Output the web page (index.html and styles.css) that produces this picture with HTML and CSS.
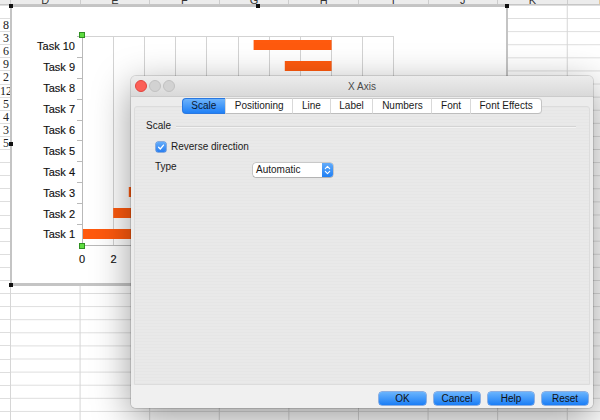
FILE: index.html
```html
<!DOCTYPE html>
<html>
<head>
<meta charset="utf-8">
<title>X Axis</title>
<link rel="stylesheet" href="styles.css">
</head>
<body>
<div class="sheet">
  <div class="colhead">
    <span class="corner"></span>
    <span class="ch">D</span><span class="ch">E</span><span class="ch">F</span><span class="ch">G</span><span class="ch">H</span><span class="ch">I</span><span class="ch">J</span><span class="ch">K</span><span class="ch">L</span>
  </div>
  <div class="rowhead">
    <span></span><span>8</span><span>3</span><span>6</span><span>9</span><span>2</span><span>12</span><span>5</span><span>4</span><span>3</span><span>5</span>
    <span></span><span></span><span></span><span></span><span></span><span></span><span></span><span></span><span></span><span></span><span></span><span></span><span></span><span></span><span></span><span></span><span></span><span></span><span></span><span></span><span></span>
  </div>
  <div class="cells"></div>
</div>

<div class="chart">
  <svg width="494" height="277" viewBox="12 7 494 277" xmlns="http://www.w3.org/2000/svg">
    <g class="grid" stroke="#d3d3d3" stroke-width="1" fill="none">
      <line x1="82" y1="36.5" x2="394" y2="36.5"/>
      <line x1="113.5" y1="36" x2="113.5" y2="245"/>
      <line x1="144.5" y1="36" x2="144.5" y2="245"/>
      <line x1="175.5" y1="36" x2="175.5" y2="245"/>
      <line x1="206.5" y1="36" x2="206.5" y2="245"/>
      <line x1="238.5" y1="36" x2="238.5" y2="245"/>
      <line x1="269.5" y1="36" x2="269.5" y2="245"/>
      <line x1="300.5" y1="36" x2="300.5" y2="245"/>
      <line x1="331.5" y1="36" x2="331.5" y2="245"/>
      <line x1="362.5" y1="36" x2="362.5" y2="245"/>
      <line x1="393.5" y1="36" x2="393.5" y2="245"/>
    </g>
    <g fill="#ff5a0e">
      <rect x="253.6" y="40" width="78" height="10"/>
      <rect x="284.8" y="61" width="46.8" height="10"/>
      <rect x="238" y="82" width="62.4" height="10"/>
      <rect x="222.4" y="103" width="62.4" height="10"/>
      <rect x="206.8" y="124" width="62.4" height="10"/>
      <rect x="191.2" y="145" width="62.4" height="10"/>
      <rect x="160" y="166" width="62.4" height="10"/>
      <rect x="128.8" y="187" width="62.4" height="10"/>
      <rect x="113.2" y="208" width="62.4" height="10"/>
      <rect x="82" y="229" width="78" height="10"/>
    </g>
    <g stroke="#b9b9b9" stroke-width="1" fill="none">
      <line x1="82.5" y1="36" x2="82.5" y2="245"/>
      <line x1="82" y1="245.5" x2="394" y2="245.5"/>
      <line x1="77" y1="36.5" x2="82" y2="36.5"/>
      <line x1="77" y1="57.5" x2="82" y2="57.5"/>
      <line x1="77" y1="78.5" x2="82" y2="78.5"/>
      <line x1="77" y1="99.5" x2="82" y2="99.5"/>
      <line x1="77" y1="120.5" x2="82" y2="120.5"/>
      <line x1="77" y1="140.5" x2="82" y2="140.5"/>
      <line x1="77" y1="161.5" x2="82" y2="161.5"/>
      <line x1="77" y1="182.5" x2="82" y2="182.5"/>
      <line x1="77" y1="203.5" x2="82" y2="203.5"/>
      <line x1="77" y1="224.5" x2="82" y2="224.5"/>
    </g>
    <g class="labels" text-anchor="end">
      <text x="75" y="50">Task 10</text>
      <text x="75" y="71">Task 9</text>
      <text x="75" y="92">Task 8</text>
      <text x="75" y="113">Task 7</text>
      <text x="75" y="134">Task 6</text>
      <text x="75" y="155">Task 5</text>
      <text x="75" y="176">Task 4</text>
      <text x="75" y="197">Task 3</text>
      <text x="75" y="218">Task 2</text>
      <text x="75" y="238">Task 1</text>
    </g>
    <g class="labels" text-anchor="middle">
      <text x="82" y="263">0</text>
      <text x="113.5" y="263">2</text>
      <text x="144.5" y="263">4</text>
    </g>
    <rect x="79.5" y="32.5" width="5" height="5" fill="#5fdc41" stroke="#2f8f22" stroke-width="1"/>
    <rect x="79.5" y="243.5" width="5" height="5" fill="#5fdc41" stroke="#2f8f22" stroke-width="1"/>
  </svg>
  <span class="handle h-tl"></span>
  <span class="handle h-tm"></span>
  <span class="handle h-tr"></span>
  <span class="handle h-ml"></span>
  <span class="handle h-bl"></span>
</div>

<div class="dialog">
  <div class="titlebar">
    <div class="lights">
      <span class="light red"></span><span class="light"></span><span class="light"></span>
    </div>
    <div class="title">X Axis</div>
    <div></div>
  </div>
  <div class="body">
    <div class="tabs">
      <span class="tab active">Scale</span>
      <span class="tab">Positioning</span>
      <span class="tab">Line</span>
      <span class="tab">Label</span>
      <span class="tab">Numbers</span>
      <span class="tab">Font</span>
      <span class="tab">Font Effects</span>
    </div>
    <div class="panel">
      <div class="section-head"><span>Scale</span><span class="rule"></span></div>
      <div class="check-row">
        <span class="checkbox">
          <svg width="10" height="10" viewBox="0 0 10 10"><path d="M2.6 5.3 L4.3 7 L7.5 3.1" fill="none" stroke="#fff" stroke-width="1.3" stroke-linecap="round" stroke-linejoin="round"/></svg>
        </span>
        <span>Reverse direction</span>
      </div>
      <div class="type-row">
        <span class="type-label">Type</span>
        <div class="select">
          <span class="select-text">Automatic</span>
          <span class="stepper">
            <svg width="11" height="14" viewBox="0 0 11 14"><path d="M3.3 5.6 L5.5 3.4 L7.7 5.6 M3.3 8.4 L5.5 10.6 L7.7 8.4" fill="none" stroke="#fff" stroke-width="1.1" stroke-linecap="round" stroke-linejoin="round"/></svg>
          </span>
        </div>
      </div>
    </div>
  </div>
  <div class="footer">
    <button class="btn wide">OK</button>
    <button class="btn">Cancel</button>
    <button class="btn">Help</button>
    <button class="btn">Reset</button>
  </div>
</div>
</body>
</html>
```
FILE: styles.css
```css
html, body {
  margin: 0;
  padding: 0;
}
body {
  width: 600px;
  height: 420px;
  overflow: hidden;
  position: relative;
  background: #fff;
  font-family: "Liberation Sans", Arial, Helvetica, sans-serif;
}

/* spreadsheet background */
.sheet {
  display: grid;
  grid-template-columns: 10px 1fr;
  grid-template-rows: 5px 1fr;
  height: 420px;
}
.colhead {
  grid-column: 1 / 3;
  display: flex;
  overflow: hidden;
  background: #ececec;
  border-bottom: 1px solid #c6c6c6;
  box-sizing: border-box;
}
.corner {
  flex: none;
  width: 10px;
}
.ch {
  flex: none;
  width: 69.6px;
  box-sizing: border-box;
  border-left: 1px solid #cdcdcd;
  text-align: center;
  font-size: 11px;
  line-height: 0;
  color: #333;
}
.rowhead {
  display: flex;
  flex-direction: column;
  overflow: hidden;
}
.rowhead span {
  flex: none;
  height: 13.1px;
  box-sizing: border-box;
  border-top: 1px solid #dedede;
  font-family: "Liberation Serif", "Times New Roman", serif;
  font-size: 12px;
  line-height: 12px;
  text-align: right;
  color: #222;
  overflow: hidden;
  padding-right: 1px;
}
.cells {
  background-color: #fff;
  background-image:
    linear-gradient(to right, #d6d6d6 1px, transparent 1px),
    linear-gradient(to bottom, #dcdcdc 1px, transparent 1px);
  background-size: 69.6px 100%, 100% 13.1px;
}

/* chart object */
.chart {
  position: absolute;
  left: 10px;
  top: 5px;
  width: 498px;
  height: 281px;
  box-sizing: border-box;
  border: 2px solid #c4c4c4;
  border-bottom-width: 3px;
  background: #fff;
}
.chart svg {
  display: block;
}
.labels text {
  font-family: "Liberation Sans", Arial, sans-serif;
  font-size: 11px;
  fill: #111;
  stroke: #111;
  stroke-width: 0.15px;
}
.handle {
  position: absolute;
  width: 4px;
  height: 4px;
  background: #111;
}
.h-tl { left: -3px; top: -3px; }
.h-tm { left: 244px; top: -3px; }
.h-tr { left: 493px; top: -3px; }
.h-ml { left: -3px; top: 135px; }
.h-bl { left: -3px; top: 276px; }

/* dialog */
.dialog {
  position: absolute;
  left: 131px;
  top: 76px;
  width: 462px;
  height: 332px;
  border-radius: 5px;
  background: #ececec;
  box-shadow: 0 10px 38px rgba(0, 0, 0, 0.4), 0 0 0 1px rgba(0, 0, 0, 0.12);
  display: flex;
  flex-direction: column;
  overflow: hidden;
  font-size: 10px;
  color: #1a1a1a;
}
.titlebar {
  flex: none;
  height: 21px;
  box-sizing: border-box;
  display: grid;
  grid-template-columns: 1fr auto 1fr;
  align-items: center;
  background: linear-gradient(#ececec, #d9d9d9);
  border-bottom: 1px solid #cbcbcb;
}
.lights {
  display: flex;
  gap: 2px;
  padding-left: 4px;
}
.light {
  width: 12px;
  height: 12px;
  box-sizing: border-box;
  border-radius: 50%;
  background: #d2d2d2;
  border: 1px solid #c0c0c0;
}
.light.red {
  background: #fc5f57;
  border-color: #e0443e;
}
.title {
  font-size: 10px;
  color: #4a4a4a;
}
.body {
  flex: 1;
  display: flex;
  flex-direction: column;
  padding: 1px 3px 0;
  min-height: 0;
}
.tabs {
  flex: none;
  display: flex;
  justify-content: center;
  position: relative;
  z-index: 1;
  margin-bottom: -8px;
}
.tab {
  height: 16px;
  box-sizing: border-box;
  line-height: 14px;
  padding: 0 8.7px;
  background: #fff;
  border-top: 1px solid #c9c9c9;
  border-bottom: 1px solid #bdbdbd;
  border-left: 1px solid #d9d9d9;
  color: #1a1a1a;
}
.tab:first-child {
  border-left: 1px solid #c4c4c4;
  border-radius: 4px 0 0 4px;
}
.tab:last-child {
  border-right: 1px solid #c4c4c4;
  border-radius: 0 4px 4px 0;
}
.tab.active {
  background: linear-gradient(#6db3fb, #1f80f6);
  border-color: #2a78e0;
  color: #0b1a33;
}
.panel {
  flex: 1;
  box-sizing: border-box;
  border: 1px solid #dcdcdc;
  border-radius: 3px 3px 0 0;
  background: repeating-linear-gradient(to bottom, #e6e6e6 0, #e6e6e6 1px, #e9e9e9 1px, #e9e9e9 3px);
  padding: 13px 13px 0 11px;
}
.section-head {
  display: flex;
  align-items: center;
  gap: 5px;
  height: 12px;
  line-height: 12px;
}
.rule {
  flex: 1;
  height: 1px;
  background: #d4d4d4;
  box-shadow: 0 1px 0 #f4f4f4;
}
.check-row {
  display: flex;
  align-items: center;
  gap: 5px;
  margin-top: 9px;
  padding-left: 10px;
  height: 12px;
  line-height: 12px;
}
.checkbox {
  width: 10px;
  height: 10px;
  border-radius: 2px;
  background: linear-gradient(#63acfa, #2a7ff0);
  box-shadow: 0 0 0 0.5px #2c6fd0;
  display: flex;
}
.checkbox svg {
  display: block;
}
.type-row {
  display: flex;
  align-items: flex-start;
  margin-top: 10px;
  padding-left: 9px;
}
.type-label {
  width: 98px;
  line-height: 12px;
  margin-top: -2px;
}
.select {
  width: 80px;
  height: 14px;
  box-sizing: border-box;
  display: flex;
  align-items: center;
  background: #fff;
  border-radius: 3px;
  box-shadow: 0 0 0 0.5px rgba(0, 0, 0, 0.28), 0 1px 1px rgba(0, 0, 0, 0.12);
  padding-left: 3px;
}
.select-text {
  flex: 1;
  line-height: 14px;
}
.stepper {
  width: 11px;
  height: 14px;
  border-radius: 0 3px 3px 0;
  background: linear-gradient(#62abfa, #1f7ff4);
  display: flex;
}
.stepper svg {
  display: block;
}
.footer {
  flex: none;
  height: 23px;
  box-sizing: border-box;
  background: #f0f0f0;
  display: flex;
  justify-content: flex-end;
  align-items: flex-start;
  gap: 8px;
  padding: 7px 5px 0 0;
}
.btn {
  width: 46px;
  height: 13px;
  padding: 0;
  border: none;
  border-radius: 3px;
  background: linear-gradient(#6ab4fd, #1b7ef6);
  box-shadow: 0 0 0 0.5px #2b6fd2;
  font-family: "Liberation Sans", Arial, sans-serif;
  font-size: 10px;
  line-height: 13px;
  color: #111;
}
.btn.wide {
  width: 47px;
}
```
